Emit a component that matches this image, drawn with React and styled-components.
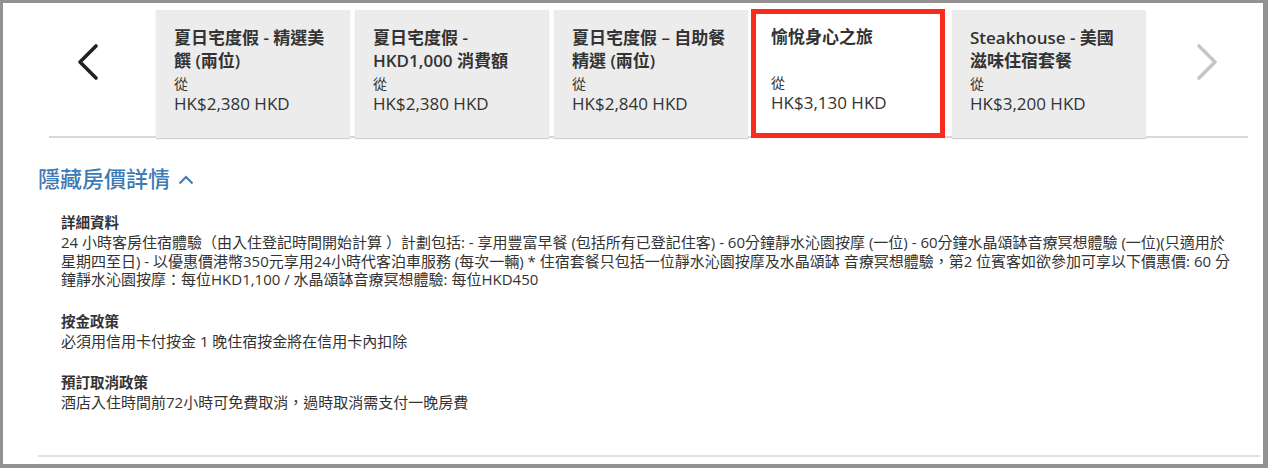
import styled, { createGlobalStyle } from "styled-components";

const GlobalStyle = createGlobalStyle`
  html, body {
    margin: 0;
    padding: 0;
    background: #929292;
  }
  body {
    font-family: "Open Sans", "Noto Sans CJK TC", sans-serif;
    color: #333333;
  }
  * {
    box-sizing: border-box;
  }
`;

const packages = [
  { title: "夏日宅度假 - 精選美饌 (兩位)", price: "HK$2,380 HKD" },
  { title: "夏日宅度假 - HKD1,000 消費額", price: "HK$2,380 HKD" },
  { title: "夏日宅度假 – 自助餐精選 (兩位)", price: "HK$2,840 HKD" },
  { title: "愉悅身心之旅", price: "HK$3,130 HKD", selected: true },
  { title: "Steakhouse - 美國滋味住宿套餐", price: "HK$3,200 HKD" },
];

export default function App() {
  return (
    <Frame>
      <GlobalStyle />
      <Panel>
        <Carousel>
          <ArrowSlot>
            <svg width="24" height="38" viewBox="0 0 24 38">
              <polyline
                points="20,3 4,19 20,35"
                fill="none"
                stroke="#222"
                strokeWidth="3.6"
                strokeLinecap="round"
                strokeLinejoin="round"
              />
            </svg>
          </ArrowSlot>
          <Track>
            {packages.map((p) => (
              <Card key={p.title} $selected={p.selected}>
                <CardTitle>{p.title}</CardTitle>
                <FromLabel>從</FromLabel>
                <Price>{p.price}</Price>
              </Card>
            ))}
          </Track>
          <ArrowSlot $right>
            <svg width="24" height="38" viewBox="0 0 24 38">
              <polyline
                points="4,3 20,19 4,35"
                fill="none"
                stroke="#c6c6c6"
                strokeWidth="3.6"
                strokeLinecap="round"
                strokeLinejoin="round"
              />
            </svg>
          </ArrowSlot>
        </Carousel>

        <Toggle>
          隱藏房價詳情
          <svg width="16" height="10" viewBox="0 0 16 10">
            <polyline
              points="1.5,8.5 8,2 14.5,8.5"
              fill="none"
              stroke="#3d7ab6"
              strokeWidth="2"
            />
          </svg>
        </Toggle>

        <Details>
          <Block>
            <BlockTitle>詳細資料</BlockTitle>
            <BlockText>
              24 小時客房住宿體驗（由入住登記時間開始計算 ）計劃包括: - 享用豐富早餐 (包括所有已登記住客) - 60分鐘靜水沁園按摩 (一位) - 60分鐘水晶頌缽音療冥想體驗 (一位)(只適用於
              <br />
              星期四至日) - 以優惠價港幣350元享用24小時代客泊車服務 (每次一輛) * 住宿套餐只包括一位靜水沁園按摩及水晶頌缽 音療冥想體驗，第2 位賓客如欲參加可享以下價惠價: 60 分
              <br />
              鐘靜水沁園按摩：每位HKD1,100 / 水晶頌缽音療冥想體驗: 每位HKD450
            </BlockText>
          </Block>
          <Block>
            <BlockTitle>按金政策</BlockTitle>
            <BlockText>必須用信用卡付按金 1 晚住宿按金將在信用卡內扣除</BlockText>
          </Block>
          <Block>
            <BlockTitle>預訂取消政策</BlockTitle>
            <BlockText>酒店入住時間前72小時可免費取消，過時取消需支付一晚房費</BlockText>
          </Block>
        </Details>

        <Divider />
      </Panel>
    </Frame>
  );
}

const Frame = styled.div`
  width: 1268px;
  height: 468px;
  padding: 3px 5px 4px 3px;
  background: #929292;
`;

const Panel = styled.div`
  height: 100%;
  background: #ffffff;
  padding-top: 7px;
  display: flex;
  flex-direction: column;
`;

const Carousel = styled.div`
  display: flex;
  align-items: stretch;
  height: 128px;
  margin: 0 15px 0 46px;
  background: linear-gradient(#d9d9d9, #d9d9d9) left bottom / 100% 2px no-repeat;
`;

const ArrowSlot = styled.div`
  width: ${(p) => (p.$right ? "101px" : "107px")};
  flex-shrink: 0;
  display: flex;
  align-items: flex-start;
  padding-top: 33px;
  padding-left: ${(p) => (p.$right ? "49px" : "27px")};
`;

const Track = styled.div`
  display: flex;
  gap: 5px;
`;

const Card = styled.div`
  width: 194px;
  height: ${(p) => (p.$selected ? "129px" : "128px")};
  margin: ${(p) => (p.$selected ? "-1px 2px 0 -2px" : "0")};
  padding: ${(p) => (p.$selected ? "11px 11px 0 15px" : "16px 16px 0 18px")};
  background: ${(p) => (p.$selected ? "#ffffff" : "#ececec")};
  border: ${(p) => (p.$selected ? "5px solid #fb2a1e" : "none")};
  box-shadow: ${(p) => (p.$selected ? "none" : "0 1px 1px rgba(0, 0, 0, 0.18)")};
  display: flex;
  flex-direction: column;
`;

const CardTitle = styled.div`
  font-size: 17px;
  line-height: 23px;
  font-weight: 600;
  min-height: 46px;
  color: #333333;
`;

const FromLabel = styled.div`
  margin-top: 3px;
  font-size: 14px;
  line-height: 18px;
  color: #333333;
`;

const Price = styled.div`
  font-size: 17px;
  line-height: 22px;
  color: #333333;
`;

const Toggle = styled.div`
  margin: 25px 0 0 35px;
  display: flex;
  align-items: center;
  gap: 8px;
  font-size: 22px;
  line-height: 30px;
  font-weight: 500;
  color: #3d7ab6;

  svg {
    margin-top: 4px;
  }
`;

const Details = styled.div`
  margin: 19px 0 0 58px;
  display: flex;
  flex-direction: column;
  gap: 22px;
`;

const Block = styled.div`
  display: flex;
  flex-direction: column;
`;

const BlockTitle = styled.div`
  font-size: 14.5px;
  line-height: 21px;
  font-weight: 700;
  color: #333333;
`;

const BlockText = styled.div`
  font-size: 15px;
  line-height: 18.6px;
  color: #333333;
  white-space: nowrap;
`;

const Divider = styled.div`
  margin: auto 3px 7px 35px;
  height: 2px;
  background: #e0e0e0;
`;
